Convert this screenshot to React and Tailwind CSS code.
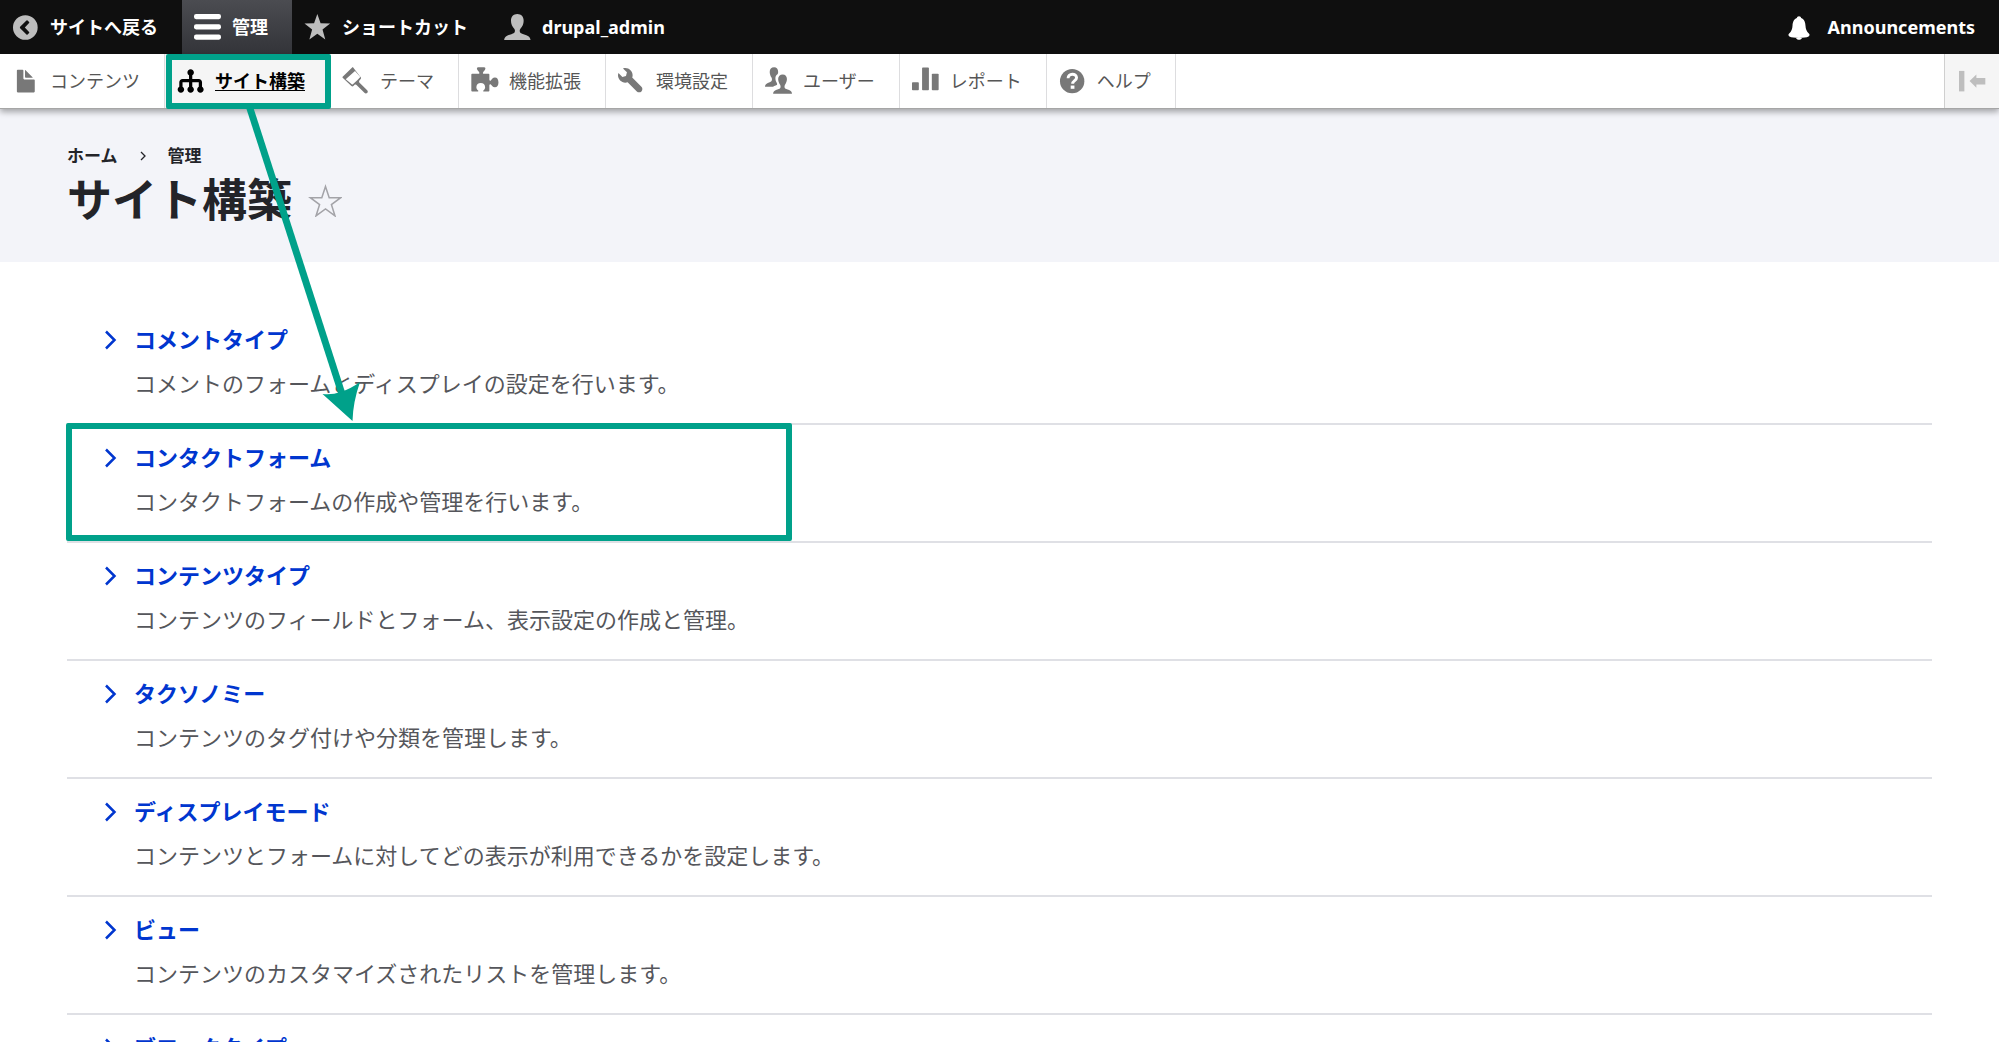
import React from "react";

const Svg = ({ children, className = "" }) => (
  <svg viewBox="0 0 16 16" className={"w-[26px] h-[26px] shrink-0 overflow-visible " + className} fill="currentColor" aria-hidden="true">
    {children}
  </svg>
);

const BackIcon = () => (
  <Svg>
    <path
      fillRule="evenodd"
      d="M8.2.7a7.6 7.6 0 1 0 0 15.2A7.6 7.6 0 0 0 8.2.7zM10.5 4.9a.5.5 0 0 1 0 .7L7.9 8.3l2.6 2.7a.5.5 0 0 1 0 .7l-.9.9a.5.5 0 0 1-.7 0L5 8.7a.6.6 0 0 1 0-.8L8.9 4a.5.5 0 0 1 .7 0z"
    />
  </Svg>
);
const MenuIcon = () => (
  <Svg>
    <rect x="0" y="0" width="16.6" height="3.2" rx="1.3" />
    <rect x="0" y="6.3" width="16.6" height="3.2" rx="1.3" />
    <rect x="0" y="12.6" width="16.6" height="3.2" rx="1.3" />
  </Svg>
);
const StarIcon = () => (
  <Svg>
    <path d="M8.2 0l2 5.7 5.9.2-4.7 3.7 1.7 6.1-4.9-3.5-4.9 3.5L5 9.6.3 5.9l5.9-.2z" />
  </Svg>
);
const PersonIcon = () => (
  <Svg>
    <path d="M8.2 0C5.8 0 4.3 1.7 4.3 4.1c0 1.9.8 3.7 2 4.9.6.7.6 2.2-.1 2.7-1 .7-3.4 1-4.8 2-.8.6-1.3 1.4-1.3 2.3h16.2c0-.9-.5-1.7-1.3-2.3-1.4-1-3.8-1.3-4.8-2-.7-.5-.7-2-.1-2.7 1.2-1.2 2-3 2-4.9C12.1 1.7 10.6 0 8.2 0z" />
  </Svg>
);
const FileIcon = () => (
  <Svg>
    <path d="M12.502 7h-5c-.276 0-.502-.225-.502-.5v-5c0-.275-.225-.5-.5-.5h-3c-.275 0-.5.225-.5.5v13.029c0 .275.225.5.5.5h10c.275 0 .5-.225.5-.5v-7.029c0-.275-.225-.5-.498-.5zM8.502 6h4c.275 0 .34-.159.146-.354l-4.293-4.292c-.195-.195-.353-.129-.353.146v4c0 .275.225.5.5.5z" />
  </Svg>
);
const OrgIcon = () => (
  <Svg>
    <path
      transform="translate(.4 .2)"
      d="M15.002 11.277v-2.777c0-1.103-.897-2-2-2h-4v-2.277c.596-.347 1-.985 1-1.723 0-1.104-.896-2-2-2s-2 .896-2 2c0 .738.405 1.376 1 1.723v2.277h-4c-1.103 0-2 .897-2 2v2.777c-.596.347-1 .984-1 1.723 0 1.104.896 2 2 2s2-.896 2-2c0-.738-.403-1.376-1-1.723v-2.777h4v2.777c-.596.347-1 .984-1 1.723 0 1.104.896 2 2 2s2-.896 2-2c0-.738-.403-1.376-1-1.723v-2.777h4v2.777c-.597.347-1 .984-1 1.723 0 1.104.896 2 2 2s2-.896 2-2c0-.738-.401-1.376-1-1.723z"
    />
  </Svg>
);
const BrushIcon = () => (
  <Svg>
    <path
      fillRule="evenodd"
      d="M6.1-.2L.4 5.4c-.2.2-.2.4 0 .6l5.400 5.100c.4.4.8.4 1.200 0l.6-.6c.5-.4 1.100-.4 1.500.100l4.700 4.700c.5.5 1.200.500 1.700.1.500-.5.500-1.200 0-1.700l-4.700-4.700c-.4-.4-.4-1 0-1.500l.7-.8c.3-.4.3-.8-.1-1.200L7-.2c-.3-.3-.6-.3-.9 0zM8 1.900l3 3.300c.2.200.2.500 0 .7L9.400 7.600 6.700 10c-.2.200-.5.200-.7 0L2.300 6.900z"
    />
  </Svg>
);
const PuzzleIcon = () => (
  <Svg>
    <path d="M.2 4c0-.3.200-.5.500-.5h3.900c.5 0 .7-.4.500-.8C4.700 2 3.900 1.500 3.700.6 3.500 0 3.800-.5 4.400-.5h3.700c.6 0 .9.500.7 1.100-.2.900-1 1.400-1.400 2.100-.2.400 0 .8.500.8h2.900c.300 0 .500.200.500.500v3.200c0 .600.500.800.9.500.6-.6 1.200-1.800 2.500-1.800 1.400 0 2.200 1.200 2.200 3s-.8 3-2.200 3c-1.300 0-1.900-1.200-2.500-1.800-.4-.3-.9-.1-.9.500v3.400c0 .3-.2.500-.5.500H7.900c-.4 0-.500-.3-.300-.600.5-.600 1.100-1.100 1.100-2.100 0-1.500-1.100-2.500-2.700-2.500s-2.700 1-2.700 2.500c0 1 .6 1.500 1.100 2.100.2.300.1.600-.3.600H.7c-.3 0-.5-.2-.5-.5z" />
  </Svg>
);
const WrenchIcon = () => (
  <Svg>
    <path d="M14.416 11.586l-.01-.008v-.001l-5.656-5.656c.15-.449.252-.921.252-1.421 0-2.485-2.016-4.5-4.502-4.5-.505 0-.981.102-1.434.255l2.431 2.431-.588 2.196-2.196.588-2.445-2.445c-.162.464-.268.956-.268 1.475 0 2.486 2.014 4.5 4.5 4.5.5 0 .972-.102 1.421-.251l5.667 5.665c.781.781 2.047.781 2.828 0s.781-2.047 0-2.828z" />
  </Svg>
);
const PeopleIcon = () => (
  <Svg>
    <path d="M5.600-.400C3.900-.4 2.900.7 2.900 2.400c0 1.300.5 2.600 1.100 3.500.4.600.4 1.900-.1 2.300-.8.600-2 .8-2.900 1.500-.600.400-1 1.100-1 1.800h5c.8-.5 1.700-.7 2.300-1 .300-.300.200-.9-.1-1.400-.6-1-.8-1.900-.8-2.800 0-1.200.4-1.900 1.300-2.500.300-.3.400-.8.400-1.400C8.100.7 7.200-.4 5.600-.4z" />
    <path d="M10.900 4c-1.700 0-2.800 1.100-2.800 2.800 0 1.300.5 2.600 1.200 3.500.4.600.4 1.900-.1 2.300-.8.600-2.300.7-3.200 1.400-.600.400-1 1-1 1.900h11.600c0-.9-.4-1.500-1-1.900-.9-.7-2.400-.8-3.200-1.400-.5-.4-.5-1.700-.1-2.300.7-.9 1.200-2.200 1.200-3.500 0-1.700-1-2.800-2.600-2.800z" />
  </Svg>
);
const ChartIcon = () => (
  <Svg>
    <rect x="0" y="8.700" width="4.200" height="5" rx=".5" />
    <rect x="6.200" y="-.300" width="4.200" height="14" rx=".5" />
    <rect x="12.200" y="3.500" width="4.200" height="10.200" rx=".5" />
  </Svg>
);
const HelpIcon = () => (
  <Svg>
    <circle cx="8.100" cy="8.100" r="7.500" />
    <path d="M5.600 6.300c0-1.500 1.100-2.500 2.600-2.500s2.600.9 2.600 2.200c0 1.800-2.400 1.800-2.400 3.700" fill="none" stroke="#fff" strokeWidth="1.800" />
    <rect x="7.200" y="10.800" width="2.300" height="2" fill="#fff" />
  </Svg>
);
const BellIcon = () => (
  <Svg>
    <path d="M8 1.400c-.8 0-1.200.5-1.300 1C4.700 3.100 4.100 5.200 4 7.200c-.1 2-.6 3.400-2.200 5-.5.500-.4 1.200.300 1.600 1.200.6 3.300.9 5.900.9s4.700-.3 5.900-.9c.7-.4.8-1.100.3-1.600-1.600-1.600-2.100-3-2.200-5-.1-2-.7-4.100-2.700-4.800-.1-.5-.5-1-1.300-1z" />
    <path d="M6.200 14.800h3.600c-.2.700-.9 1.100-1.800 1.100s-1.600-.4-1.800-1.100z" />
  </Svg>
);

const TABS = [
  { label: "コンテンツ", Icon: FileIcon },
  { label: "サイト構築", Icon: OrgIcon, active: true },
  { label: "テーマ", Icon: BrushIcon },
  { label: "機能拡張", Icon: PuzzleIcon },
  { label: "環境設定", Icon: WrenchIcon },
  { label: "ユーザー", Icon: PeopleIcon },
  { label: "レポート", Icon: ChartIcon },
  { label: "ヘルプ", Icon: HelpIcon },
];

const SECTIONS = [
  { title: "コメントタイプ", text: "コメントのフォームとディスプレイの設定を行います。" },
  { title: "コンタクトフォーム", text: "コンタクトフォームの作成や管理を行います。", marked: true },
  { title: "コンテンツタイプ", text: "コンテンツのフィールドとフォーム、表示設定の作成と管理。" },
  { title: "タクソノミー", text: "コンテンツのタグ付けや分類を管理します。" },
  { title: "ディスプレイモード", text: "コンテンツとフォームに対してどの表示が利用できるかを設定します。" },
  { title: "ビュー", text: "コンテンツのカスタマイズされたリストを管理します。" },
  { title: "ブロックタイプ" },
];

function BarLink({ label, Icon, active, notice }) {
  return (
    <a
      href="#"
      className={
        "flex items-center pl-3 pr-6 h-full text-white " +
        (notice ? "gap-4 " : "gap-3 ") +
        (active ? "bg-linear-to-b from-[#4b4c51] to-[#333439]" : "")
      }
    >
      <span className={active || notice ? "text-white" : "text-[#bdbdbd]"}>
        <Icon />
      </span>
      <span>{label}</span>
    </a>
  );
}

export default function App() {
  return (
    <div className="relative h-screen overflow-hidden bg-white text-[#232429] font-['Noto_Sans','Noto_Sans_CJK_JP',sans-serif]">
      <nav className="flex items-center h-[54px] bg-[#0f0f0f] text-lg font-bold whitespace-nowrap">
        <BarLink label="サイトへ戻る" Icon={BackIcon} />
        <BarLink label="管理" Icon={MenuIcon} active />
        <BarLink label="ショートカット" Icon={StarIcon} />
        <BarLink label="drupal_admin" Icon={PersonIcon} />
        <div className="ml-auto h-full">
          <BarLink label="Announcements" Icon={BellIcon} notice />
        </div>
      </nav>

      <nav className="relative flex h-[55px] bg-white text-lg text-[#565656] border-b border-[#a6a6a6] shadow-[0_3px_6px_rgba(0,0,0,0.33)] whitespace-nowrap">
        {TABS.map(({ label, Icon, active }) => (
          <a
            key={label}
            href="#"
            className={
              "relative flex items-center gap-3 pl-3 pr-6 border-r border-[#dddddf] " +
              (active ? "bg-[#f5f5f5] text-black font-bold" : "")
            }
          >
            <span className={active ? "text-black" : "text-[#787878]"}>
              <Icon />
            </span>
            <span className={active ? "underline underline-offset-2 decoration-1" : ""}>{label}</span>
            {active && <span className="absolute left-px -right-[2px] top-0 -bottom-px border-[6px] border-[#00a18a] rounded-xs" />}
          </a>
        ))}
        <button type="button" aria-label="縦方向" className="ml-auto w-[55px] flex items-center justify-center bg-[#f5f5f5] border-l border-[#cfcfcf] text-[#bebebe]">
          <Svg>
            <rect x="0" y="1.800" width="3.300" height="12.600" />
            <path d="M6.500 8l4.200-4v2.100h5.500v4h-5.500v2z" />
          </Svg>
        </button>
      </nav>

      <header className="bg-[#f3f4f9] px-[67px] pt-[33px] h-[153px]">
        <nav className="flex items-center gap-[21px] text-[17px] leading-7 font-bold">
          <a href="#">ホーム</a>
          <svg viewBox="0 0 8 12" className="w-2 h-3" fill="none" stroke="currentColor" strokeWidth="1.300" aria-hidden="true">
            <path d="M2 2l4 4-4 4" />
          </svg>
          <a href="#">管理</a>
        </nav>
        <div className="flex items-center gap-4">
          <h1 className="text-[45px] leading-[60px] font-bold">サイト構築</h1>
          <button type="button" aria-label="ショートカットに追加">
            <svg viewBox="0 0 34 34" className="w-[34px] h-[34px]" fill="none" stroke="#a3a3a8" strokeWidth="1.500" aria-hidden="true">
              <path d="M17.500 3.500l3.700 11.200h11.500l-9.300 6.900 3.600 11.300-9.500-7-9.500 7 3.600-11.300-9.300-6.900h11.500z" />
            </svg>
          </button>
        </div>
      </header>

      <main className="px-[67px] pt-[45px]">
        <ul>
          {SECTIONS.map(({ title, text, marked }) => (
            <li key={title} className="relative flex gap-4 pl-[37px] pt-[18px] pb-[26px] border-b-2 border-[#dfe0e5]">
              <svg viewBox="0 0 14 28" className="w-[14px] h-7 shrink-0" fill="none" stroke="#0036cf" strokeWidth="2.500" aria-hidden="true">
                <path d="M2 6.500l8.500 8.500L2 23.500" />
              </svg>
              <div className="text-[22px] leading-7">
                <a href="#" className="block font-bold text-[#0036cf]">{title}</a>
                {text && <p className="mt-4 text-[#55565b]">{text}</p>}
              </div>
              {marked && <span className="absolute -left-px -top-[2px] h-[118px] w-[726px] border-[6px] border-[#00a18a] rounded-xs" />}
            </li>
          ))}
        </ul>
      </main>

      <svg viewBox="0 0 120 320" className="absolute left-[245px] top-[106px] w-[120px] h-[320px] pointer-events-none" aria-hidden="true">
        <path d="M4.500 1L97 288" stroke="#00a18a" strokeWidth="7" />
        <path d="M107.500 315L77.500 288q10 1 18-2 10-3 19.500-10q-7 20-7.500 39z" fill="#00a18a" />
      </svg>
    </div>
  );
}
